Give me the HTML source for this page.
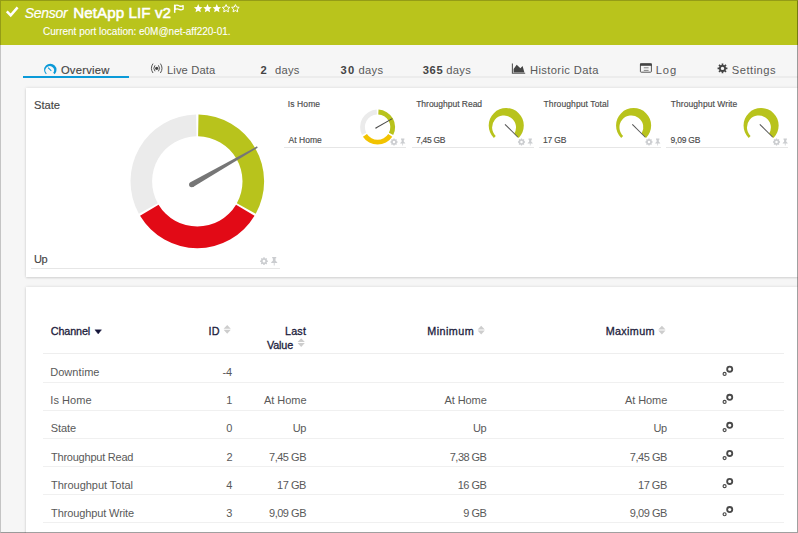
<!DOCTYPE html>
<html><head><meta charset="utf-8">
<style>
html,body{margin:0;padding:0}
body{width:798px;height:533px;overflow:hidden;position:relative;background:#f6f6f6;font-family:"Liberation Sans",sans-serif;color:#555}
.t{position:absolute;white-space:nowrap;line-height:1}
.td{font-size:11px;color:#595959}
.panel{position:absolute;background:#fff;box-shadow:0 0 3px rgba(0,0,0,0.12),0 1px 2px rgba(0,0,0,0.1)}
.line{position:absolute;height:1px;background:#e6e6e6}
.rline{position:absolute;height:1px;background:#f0f0f0}
.frame{position:absolute;left:0;top:0;width:798px;height:533px;box-sizing:border-box;border-left:1px solid rgba(0,0,0,0.2);border-top:1px solid rgba(0,0,0,0.2);border-right:1px solid rgba(0,0,0,0.37);border-bottom:1px solid rgba(0,0,0,0.37)}
</style></head><body>
<div style="position:absolute;left:0;top:0;width:798px;height:45px;background:#b9c41c"></div>
<div style="position:absolute;left:23px;top:76px;width:775px;height:2px;background:#ececec"></div>
<div style="position:absolute;left:23px;top:76px;width:106px;height:2px;background:#0b9ad8"></div>
<div class="panel" style="left:26px;top:88px;width:772px;height:189px"></div>
<div class="line" style="left:30.5px;top:268px;width:249px"></div>
<div class="line" style="left:284px;top:147px;width:122px"></div>
<div class="line" style="left:411.5px;top:147px;width:122px"></div>
<div class="line" style="left:539px;top:147px;width:122px"></div>
<div class="line" style="left:666.3px;top:147px;width:122px"></div>
<div class="panel" style="left:26px;top:287px;width:772px;height:260px"></div>
<div class="line" style="left:42.5px;top:353px;width:741px;background:#eeeeee"></div>
<div class="rline" style="left:42.5px;top:381.60px;width:741px"></div><div class="rline" style="left:42.5px;top:409.67px;width:741px"></div><div class="rline" style="left:42.5px;top:437.74px;width:741px"></div><div class="rline" style="left:42.5px;top:465.81px;width:741px"></div><div class="rline" style="left:42.5px;top:493.88px;width:741px"></div><div class="rline" style="left:42.5px;top:521.95px;width:741px"></div>
<div class="t" style="left:24.8px;top:5.8px;font-size:14.0px;letter-spacing:-0.29px;color:#fff;font-style:italic;-webkit-text-stroke:0.2px #fff">Sensor</div>
<div class="t" style="left:73.2px;top:5.28px;font-size:15.2px;letter-spacing:0.067px;color:#fff;-webkit-text-stroke:0.55px #fff">NetApp LIF v2</div>
<div class="t" style="left:43.1px;top:26.6px;font-size:10.0px;letter-spacing:-0.01px;color:#fff;-webkit-text-stroke:0.1px #fff">Current port location: e0M@net-aff220-01.</div>
<div class="t" style="left:60.9px;top:65.18px;font-size:11.2px;letter-spacing:0.264px;color:#444;-webkit-text-stroke:0.15px #444">Overview</div>
<div class="t" style="left:166.9px;top:65.18px;font-size:11.2px;letter-spacing:0.144px;color:#595959;">Live Data</div>
<div class="t" style="left:260.45px;top:65.18px;font-size:11.2px;letter-spacing:0px;color:#444;font-weight:bold">2</div>
<div class="t" style="left:274.9px;top:65.18px;font-size:11.2px;letter-spacing:0.283px;color:#595959;">days</div>
<div class="t" style="left:340.55px;top:65.18px;font-size:11.2px;letter-spacing:1.15px;color:#444;font-weight:bold">30</div>
<div class="t" style="left:358.5px;top:65.18px;font-size:11.2px;letter-spacing:0.283px;color:#595959;">days</div>
<div class="t" style="left:422.75px;top:65.18px;font-size:11.2px;letter-spacing:0.625px;color:#444;font-weight:bold">365</div>
<div class="t" style="left:446.3px;top:65.18px;font-size:11.2px;letter-spacing:0.317px;color:#595959;">days</div>
<div class="t" style="left:530.0px;top:65.18px;font-size:11.2px;letter-spacing:0.367px;color:#595959;">Historic Data</div>
<div class="t" style="left:655.8px;top:65.18px;font-size:11.2px;letter-spacing:0.85px;color:#595959;">Log</div>
<div class="t" style="left:731.8px;top:65.18px;font-size:11.2px;letter-spacing:0.486px;color:#595959;">Settings</div>
<div class="t" style="left:34.0px;top:100.18px;font-size:11.2px;letter-spacing:-0.037px;color:#454545;-webkit-text-stroke:0.15px #454545">State</div>
<div class="t" style="left:34.05px;top:253.65px;font-size:11.0px;letter-spacing:-0.5px;color:#454545;-webkit-text-stroke:0.15px #454545">Up</div>
<div class="t" style="left:287.75px;top:100.08px;font-size:8.5px;letter-spacing:0.108px;color:#4a4a4a;-webkit-text-stroke:0.15px #4a4a4a">Is Home</div>
<div class="t" style="left:288.5px;top:135.88px;font-size:8.5px;letter-spacing:0.042px;color:#4a4a4a;-webkit-text-stroke:0.15px #4a4a4a">At Home</div>
<div class="t" style="left:416.2px;top:100.08px;font-size:8.5px;letter-spacing:-0.018px;color:#4a4a4a;-webkit-text-stroke:0.15px #4a4a4a">Throughput Read</div>
<div class="t" style="left:415.95px;top:135.88px;font-size:8.5px;letter-spacing:-0.283px;color:#4a4a4a;-webkit-text-stroke:0.15px #4a4a4a">7,45 GB</div>
<div class="t" style="left:543.5px;top:100.08px;font-size:8.5px;letter-spacing:0.103px;color:#4a4a4a;-webkit-text-stroke:0.15px #4a4a4a">Throughput Total</div>
<div class="t" style="left:543.0px;top:135.88px;font-size:8.5px;letter-spacing:-0.188px;color:#4a4a4a;-webkit-text-stroke:0.15px #4a4a4a">17 GB</div>
<div class="t" style="left:670.8px;top:100.08px;font-size:8.5px;letter-spacing:0.063px;color:#4a4a4a;-webkit-text-stroke:0.15px #4a4a4a">Throughput Write</div>
<div class="t" style="left:670.55px;top:135.88px;font-size:8.5px;letter-spacing:-0.217px;color:#4a4a4a;-webkit-text-stroke:0.15px #4a4a4a">9,09 GB</div>
<div class="t" style="left:50.7px;top:326.22px;font-size:10.8px;letter-spacing:-0.108px;color:#1c1c3c;-webkit-text-stroke:0.3px #1c1c3c">Channel</div>
<div class="t" style="left:208.55px;top:326.22px;font-size:10.8px;letter-spacing:0.15px;color:#1c1c3c;-webkit-text-stroke:0.3px #1c1c3c">ID</div>
<div class="t" style="left:284.95px;top:326.22px;font-size:10.8px;letter-spacing:0.183px;color:#1c1c3c;-webkit-text-stroke:0.3px #1c1c3c">Last</div>
<div class="t" style="left:266.9px;top:339.72px;font-size:10.8px;letter-spacing:-0.125px;color:#1c1c3c;-webkit-text-stroke:0.3px #1c1c3c">Value</div>
<div class="t" style="left:427.35px;top:326.22px;font-size:10.8px;letter-spacing:0.417px;color:#1c1c3c;-webkit-text-stroke:0.3px #1c1c3c">Minimum</div>
<div class="t" style="left:605.65px;top:326.22px;font-size:10.8px;letter-spacing:0.35px;color:#1c1c3c;-webkit-text-stroke:0.3px #1c1c3c">Maximum</div>
<div class="t" style="left:50.2px;top:367.15px;font-size:11.0px;letter-spacing:0.057px;color:#595959;">Downtime</div>
<div class="t" style="left:222.4px;top:367.15px;font-size:11.0px;letter-spacing:0px;color:#595959;">-4</div>
<div class="t" style="left:50.3px;top:395.29px;font-size:11.0px;letter-spacing:0.05px;color:#595959;">Is Home</div>
<div class="t" style="left:226.15px;top:395.29px;font-size:11.0px;letter-spacing:0px;color:#595959;">1</div>
<div class="t" style="left:264.1px;top:395.29px;font-size:11.0px;letter-spacing:-0.058px;color:#595959;">At Home</div>
<div class="t" style="left:444.4px;top:395.29px;font-size:11.0px;letter-spacing:-0.058px;color:#595959;">At Home</div>
<div class="t" style="left:624.9px;top:395.29px;font-size:11.0px;letter-spacing:-0.058px;color:#595959;">At Home</div>
<div class="t" style="left:50.8px;top:423.43px;font-size:11.0px;letter-spacing:-0.087px;color:#595959;">State</div>
<div class="t" style="left:226.15px;top:423.43px;font-size:11.0px;letter-spacing:0px;color:#595959;">0</div>
<div class="t" style="left:292.65px;top:423.43px;font-size:11.0px;letter-spacing:-0.4px;color:#595959;">Up</div>
<div class="t" style="left:472.95px;top:423.43px;font-size:11.0px;letter-spacing:-0.4px;color:#595959;">Up</div>
<div class="t" style="left:653.45px;top:423.43px;font-size:11.0px;letter-spacing:-0.4px;color:#595959;">Up</div>
<div class="t" style="left:51.05px;top:451.57px;font-size:11.0px;letter-spacing:-0.232px;color:#595959;">Throughput Read</div>
<div class="t" style="left:226.4px;top:451.57px;font-size:11.0px;letter-spacing:0px;color:#595959;">2</div>
<div class="t" style="left:269.0px;top:451.57px;font-size:11.0px;letter-spacing:-0.475px;color:#595959;">7,45 GB</div>
<div class="t" style="left:449.8px;top:451.57px;font-size:11.0px;letter-spacing:-0.542px;color:#595959;">7,38 GB</div>
<div class="t" style="left:629.8px;top:451.57px;font-size:11.0px;letter-spacing:-0.458px;color:#595959;">7,45 GB</div>
<div class="t" style="left:51.05px;top:479.71px;font-size:11.0px;letter-spacing:-0.027px;color:#595959;">Throughput Total</div>
<div class="t" style="left:226.15px;top:479.71px;font-size:11.0px;letter-spacing:0px;color:#595959;">4</div>
<div class="t" style="left:277.05px;top:479.71px;font-size:11.0px;letter-spacing:-0.475px;color:#595959;">17 GB</div>
<div class="t" style="left:457.75px;top:479.71px;font-size:11.0px;letter-spacing:-0.55px;color:#595959;">16 GB</div>
<div class="t" style="left:638.05px;top:479.71px;font-size:11.0px;letter-spacing:-0.5px;color:#595959;">17 GB</div>
<div class="t" style="left:51.05px;top:507.85px;font-size:11.0px;letter-spacing:-0.113px;color:#595959;">Throughput Write</div>
<div class="t" style="left:226.15px;top:507.85px;font-size:11.0px;letter-spacing:0px;color:#595959;">3</div>
<div class="t" style="left:269.0px;top:507.85px;font-size:11.0px;letter-spacing:-0.475px;color:#595959;">9,09 GB</div>
<div class="t" style="left:463.3px;top:507.85px;font-size:11.0px;letter-spacing:-0.5px;color:#595959;">9 GB</div>
<div class="t" style="left:629.8px;top:507.85px;font-size:11.0px;letter-spacing:-0.458px;color:#595959;">9,09 GB</div>

<svg style="position:absolute;left:0;top:0" width="798" height="533"><path fill="#b8c31c" d="M198.49,114.61 A66.8,66.8 0 0 1 255.74,213.76 L236.84,203.30 A45.2,45.2 0 0 0 198.11,136.21 Z"/><path fill="#e20a16" d="M254.54,215.83 A66.8,66.8 0 0 1 140.06,215.83 L158.57,204.70 A45.2,45.2 0 0 0 236.03,204.70 Z"/><path fill="#ebebeb" d="M138.86,213.76 A66.8,66.8 0 0 1 196.11,114.61 L196.49,136.21 A45.2,45.2 0 0 0 157.76,203.30 Z"/><path fill="#767676" d="M193.09,186.92 L257.72,147.66 L256.98,146.36 L190.40,182.24 Z"/><circle cx="191.75" cy="184.58" r="2.7" fill="#767676"/><path fill="#b8c31c" d="M378.53,109.62 A17.5,17.5 0 0 1 393.20,135.04 L388.92,132.86 A12.7,12.7 0 0 0 378.27,114.42 Z"/><path fill="#f2c300" d="M392.27,136.64 A17.5,17.5 0 0 1 362.93,136.64 L366.95,134.02 A12.7,12.7 0 0 0 388.25,134.02 Z"/><path fill="#ebebeb" d="M362.00,135.04 A17.5,17.5 0 0 1 376.67,109.62 L376.93,114.42 A12.7,12.7 0 0 0 366.28,132.86 Z"/><path fill="#4a4a4a" d="M376.14,128.58 L392.52,118.95 L392.12,118.25 L375.59,127.62 Z"/><circle cx="375.87" cy="128.10" r="0.55" fill="#4a4a4a"/><path fill="#b8c31c" d="M493.84,137.96 A17.55,17.55 0 1 1 518.66,137.96 L514.30,133.60 A11.95,11.95 0 1 0 495.75,136.05 Z"/><path fill="#555555" d="M504.61,124.65 L517.62,137.52 L518.22,136.92 L505.35,123.91 Z"/><path fill="#b8c31c" d="M621.19,137.96 A17.55,17.55 0 1 1 646.01,137.96 L641.65,133.60 A11.95,11.95 0 1 0 623.10,136.05 Z"/><path fill="#555555" d="M631.96,124.65 L644.97,137.52 L645.57,136.92 L632.70,123.91 Z"/><path fill="#b8c31c" d="M748.69,137.96 A17.55,17.55 0 1 1 773.51,137.96 L769.15,133.60 A11.95,11.95 0 1 0 750.60,136.05 Z"/><path fill="#555555" d="M759.46,124.65 L772.47,137.52 L773.07,136.92 L760.20,123.91 Z"/><path fill="#cbcdd0" fill-rule="evenodd" d="M263.32,258.18 L263.31,257.36 L264.69,257.36 L264.68,258.18 L265.66,258.58 L266.23,258.00 L267.20,258.97 L266.62,259.54 L267.02,260.52 L267.84,260.51 L267.84,261.89 L267.02,261.88 L266.62,262.86 L267.20,263.43 L266.23,264.40 L265.66,263.82 L264.68,264.22 L264.69,265.04 L263.31,265.04 L263.32,264.22 L262.34,263.82 L261.77,264.40 L260.80,263.43 L261.38,262.86 L260.98,261.88 L260.16,261.89 L260.16,260.51 L260.98,260.52 L261.38,259.54 L260.80,258.97 L261.77,258.00 L262.34,258.58 Z M264.00,259.85 A1.35,1.35 0 1 0 264.00,262.55 A1.35,1.35 0 1 0 264.00,259.85 Z"/><path fill="#cbcdd0" d="M272.16,257.00 L276.24,257.00 L276.24,258.32 L275.52,258.32 L275.52,260.84 L277.20,262.28 L277.20,262.88 L274.62,262.88 L274.62,265.40 L273.78,265.40 L273.78,262.88 L271.20,262.88 L271.20,262.28 L272.88,260.84 L272.88,258.32 L272.16,258.32 Z"/><path fill="#cbcdd0" fill-rule="evenodd" d="M393.36,139.17 L393.37,138.46 L394.63,138.46 L394.64,139.17 L395.55,139.55 L396.06,139.05 L396.95,139.94 L396.45,140.45 L396.83,141.36 L397.54,141.37 L397.54,142.63 L396.83,142.64 L396.45,143.55 L396.95,144.06 L396.06,144.95 L395.55,144.45 L394.64,144.83 L394.63,145.54 L393.37,145.54 L393.36,144.83 L392.45,144.45 L391.94,144.95 L391.05,144.06 L391.55,143.55 L391.17,142.64 L390.46,142.63 L390.46,141.37 L391.17,141.36 L391.55,140.45 L391.05,139.94 L391.94,139.05 L392.45,139.55 Z M394.00,140.75 A1.25,1.25 0 1 0 394.00,143.25 A1.25,1.25 0 1 0 394.00,140.75 Z"/><path fill="#cbcdd0" d="M401.00,138.60 L404.40,138.60 L404.40,139.70 L403.80,139.70 L403.80,141.80 L405.20,143.00 L405.20,143.50 L403.05,143.50 L403.05,145.60 L402.35,145.60 L402.35,143.50 L400.20,143.50 L400.20,143.00 L401.60,141.80 L401.60,139.70 L401.00,139.70 Z"/><path fill="#cbcdd0" fill-rule="evenodd" d="M520.86,139.17 L520.87,138.46 L522.13,138.46 L522.14,139.17 L523.05,139.55 L523.56,139.05 L524.45,139.94 L523.95,140.45 L524.33,141.36 L525.04,141.37 L525.04,142.63 L524.33,142.64 L523.95,143.55 L524.45,144.06 L523.56,144.95 L523.05,144.45 L522.14,144.83 L522.13,145.54 L520.87,145.54 L520.86,144.83 L519.95,144.45 L519.44,144.95 L518.55,144.06 L519.05,143.55 L518.67,142.64 L517.96,142.63 L517.96,141.37 L518.67,141.36 L519.05,140.45 L518.55,139.94 L519.44,139.05 L519.95,139.55 Z M521.50,140.75 A1.25,1.25 0 1 0 521.50,143.25 A1.25,1.25 0 1 0 521.50,140.75 Z"/><path fill="#cbcdd0" d="M528.50,138.60 L531.90,138.60 L531.90,139.70 L531.30,139.70 L531.30,141.80 L532.70,143.00 L532.70,143.50 L530.55,143.50 L530.55,145.60 L529.85,145.60 L529.85,143.50 L527.70,143.50 L527.70,143.00 L529.10,141.80 L529.10,139.70 L528.50,139.70 Z"/><path fill="#cbcdd0" fill-rule="evenodd" d="M648.36,139.17 L648.37,138.46 L649.63,138.46 L649.64,139.17 L650.55,139.55 L651.06,139.05 L651.95,139.94 L651.45,140.45 L651.83,141.36 L652.54,141.37 L652.54,142.63 L651.83,142.64 L651.45,143.55 L651.95,144.06 L651.06,144.95 L650.55,144.45 L649.64,144.83 L649.63,145.54 L648.37,145.54 L648.36,144.83 L647.45,144.45 L646.94,144.95 L646.05,144.06 L646.55,143.55 L646.17,142.64 L645.46,142.63 L645.46,141.37 L646.17,141.36 L646.55,140.45 L646.05,139.94 L646.94,139.05 L647.45,139.55 Z M649.00,140.75 A1.25,1.25 0 1 0 649.00,143.25 A1.25,1.25 0 1 0 649.00,140.75 Z"/><path fill="#cbcdd0" d="M656.00,138.60 L659.40,138.60 L659.40,139.70 L658.80,139.70 L658.80,141.80 L660.20,143.00 L660.20,143.50 L658.05,143.50 L658.05,145.60 L657.35,145.60 L657.35,143.50 L655.20,143.50 L655.20,143.00 L656.60,141.80 L656.60,139.70 L656.00,139.70 Z"/><path fill="#cbcdd0" fill-rule="evenodd" d="M775.86,139.17 L775.87,138.46 L777.13,138.46 L777.14,139.17 L778.05,139.55 L778.56,139.05 L779.45,139.94 L778.95,140.45 L779.33,141.36 L780.04,141.37 L780.04,142.63 L779.33,142.64 L778.95,143.55 L779.45,144.06 L778.56,144.95 L778.05,144.45 L777.14,144.83 L777.13,145.54 L775.87,145.54 L775.86,144.83 L774.95,144.45 L774.44,144.95 L773.55,144.06 L774.05,143.55 L773.67,142.64 L772.96,142.63 L772.96,141.37 L773.67,141.36 L774.05,140.45 L773.55,139.94 L774.44,139.05 L774.95,139.55 Z M776.50,140.75 A1.25,1.25 0 1 0 776.50,143.25 A1.25,1.25 0 1 0 776.50,140.75 Z"/><path fill="#cbcdd0" d="M783.50,138.60 L786.90,138.60 L786.90,139.70 L786.30,139.70 L786.30,141.80 L787.70,143.00 L787.70,143.50 L785.55,143.50 L785.55,145.60 L784.85,145.60 L784.85,143.50 L782.70,143.50 L782.70,143.00 L784.10,141.80 L784.10,139.70 L783.50,139.70 Z"/><path d="M6.8,11.4 L10.7,15.3 L17.6,7.4" fill="none" stroke="#fff" stroke-width="2.5"/><path d="M174.7,4.6 V12.8" stroke="#fff" stroke-width="1.5"/><path d="M175,5.5 Q177.2,4.7 179.2,5.8 Q181.2,6.8 183.1,5.6 V9.3 Q181.2,10.4 179.2,9.4 Q177.2,8.5 175,9.4 Z" fill="none" stroke="#fff" stroke-width="1.3" stroke-linejoin="round"/><path d="M198.20,4.10 L199.43,6.90 L202.48,7.21 L200.20,9.25 L200.85,12.24 L198.20,10.70 L195.55,12.24 L196.20,9.25 L193.92,7.21 L196.97,6.90 Z" fill="#fff"/><path d="M207.50,4.10 L208.73,6.90 L211.78,7.21 L209.50,9.25 L210.15,12.24 L207.50,10.70 L204.85,12.24 L205.50,9.25 L203.22,7.21 L206.27,6.90 Z" fill="#fff"/><path d="M216.80,4.10 L218.03,6.90 L221.08,7.21 L218.80,9.25 L219.45,12.24 L216.80,10.70 L214.15,12.24 L214.80,9.25 L212.52,7.21 L215.57,6.90 Z" fill="#fff"/><path d="M226.10,4.60 L227.25,7.02 L229.90,7.36 L227.95,9.20 L228.45,11.84 L226.10,10.55 L223.75,11.84 L224.25,9.20 L222.30,7.36 L224.95,7.02 Z" fill="none" stroke="#fff" stroke-width="1.0"/><path d="M235.40,4.60 L236.55,7.02 L239.20,7.36 L237.25,9.20 L237.75,11.84 L235.40,10.55 L233.05,11.84 L233.55,9.20 L231.60,7.36 L234.25,7.02 Z" fill="none" stroke="#fff" stroke-width="1.0"/><path fill="#0b9ad8" d="M45.92,74.28 A6.2,6.2 0 1 1 54.68,74.28 L53.24,72.84 A4.3,4.3 0 1 0 46.71,73.49 Z"/><path fill="#0b9ad8" d="M47.69,68.07 L51.01,71.25 L51.65,70.61 L48.47,67.29 Z"/><circle cx="156.7" cy="68.3" r="1.6" fill="#444"/><path d="M155,65.3 Q152.6,68.3 155,71.3 M158.4,65.3 Q160.8,68.3 158.4,71.3 M153,63.6 Q149.8,68.3 153,73 M160.4,63.6 Q163.6,68.3 160.4,73" fill="none" stroke="#555" stroke-width="1.0"/><path d="M512.4,63.5 V73.2 H525.2" fill="none" stroke="#555" stroke-width="1.1"/><path d="M513.6,72.6 V69 L516.7,64.8 L520.4,68.3 L522.6,66.1 L524.4,72.6 Z" fill="#444"/><rect x="640.4" y="63.8" width="11" height="8.4" rx="0.8" fill="none" stroke="#555" stroke-width="1"/><rect x="640" y="63.4" width="11.8" height="2.4" fill="#444"/><path d="M643.8,67.8 H648.6 M643.8,70.4 H648.6" stroke="#777" stroke-width="0.9"/><path fill="#444" fill-rule="evenodd" d="M721.71,64.89 L721.62,63.48 L723.38,63.48 L723.29,64.89 L724.43,65.36 L725.36,64.30 L726.60,65.54 L725.54,66.47 L726.01,67.61 L727.42,67.52 L727.42,69.28 L726.01,69.19 L725.54,70.33 L726.60,71.26 L725.36,72.50 L724.43,71.44 L723.29,71.91 L723.38,73.32 L721.62,73.32 L721.71,71.91 L720.57,71.44 L719.64,72.50 L718.40,71.26 L719.46,70.33 L718.99,69.19 L717.58,69.28 L717.58,67.52 L718.99,67.61 L719.46,66.47 L718.40,65.54 L719.64,64.30 L720.57,65.36 Z M722.50,66.70 A1.7,1.7 0 1 0 722.50,70.10 A1.7,1.7 0 1 0 722.50,66.70 Z"/><path d="M227.20,324.90 L230.80,328.80 H223.60 Z M223.60,329.80 H230.80 L227.20,333.70 Z" fill="#cdcdcd"/><path d="M301.20,338.20 L304.80,342.10 H297.60 Z M297.60,343.10 H304.80 L301.20,347.00 Z" fill="#cdcdcd"/><path d="M481.20,325.70 L484.80,329.60 H477.60 Z M477.60,330.60 H484.80 L481.20,334.50 Z" fill="#cdcdcd"/><path d="M661.90,325.70 L665.50,329.60 H658.30 Z M658.30,330.60 H665.50 L661.90,334.50 Z" fill="#cdcdcd"/><path d="M94.9,329.8 H101.5 L98.2,334 Z" fill="#15153a" stroke="#15153a" stroke-width="0.4" stroke-linejoin="round"/><circle cx="729.7" cy="369.19" r="2.55" fill="none" stroke="#4a4a4a" stroke-width="1.85"/><circle cx="724.6" cy="373.89" r="1.5" fill="none" stroke="#4a4a4a" stroke-width="1.2"/><circle cx="729.7" cy="397.26" r="2.55" fill="none" stroke="#4a4a4a" stroke-width="1.85"/><circle cx="724.6" cy="401.96" r="1.5" fill="none" stroke="#4a4a4a" stroke-width="1.2"/><circle cx="729.7" cy="425.33" r="2.55" fill="none" stroke="#4a4a4a" stroke-width="1.85"/><circle cx="724.6" cy="430.03" r="1.5" fill="none" stroke="#4a4a4a" stroke-width="1.2"/><circle cx="729.7" cy="453.40" r="2.55" fill="none" stroke="#4a4a4a" stroke-width="1.85"/><circle cx="724.6" cy="458.10" r="1.5" fill="none" stroke="#4a4a4a" stroke-width="1.2"/><circle cx="729.7" cy="481.47" r="2.55" fill="none" stroke="#4a4a4a" stroke-width="1.85"/><circle cx="724.6" cy="486.17" r="1.5" fill="none" stroke="#4a4a4a" stroke-width="1.2"/><circle cx="729.7" cy="509.54" r="2.55" fill="none" stroke="#4a4a4a" stroke-width="1.85"/><circle cx="724.6" cy="514.24" r="1.5" fill="none" stroke="#4a4a4a" stroke-width="1.2"/></svg>
<div class="frame"></div>
</body></html>
